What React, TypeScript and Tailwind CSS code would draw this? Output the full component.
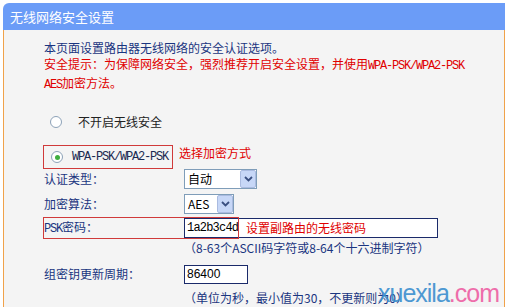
import React from 'react';

const cjk = "font-['Noto_Sans_CJK_SC','Liberation_Sans',sans-serif]";
const mono = "font-['Liberation_Mono','Noto_Sans_CJK_SC',monospace]";

const Radio = ({ checked }: { checked?: boolean }) => (
  <span className="w-[12px] h-[12px] rounded-full border border-[#8da2b8] bg-white flex items-center justify-center shrink-0">
    {checked && <span className="w-[5px] h-[5px] rounded-full bg-[#3fae3f]" />}
  </span>
);

const Select = ({ value, width }: { value: string; width: string }) => (
  <div className={`${width} h-[20px] border border-[#7f9db9] bg-white flex items-center`}>
    <span className="flex-1 pl-[3px] text-[12px] text-black leading-none">{value}</span>
    <span className="w-[16px] h-[18px] bg-[#c7d7f7] border border-[#aabbe0] rounded-[2px] flex items-center justify-center">
      <svg width="9" height="6" viewBox="0 0 9 6">
        <path d="M1 1 L4.5 4.5 L8 1" stroke="#3a4f80" strokeWidth="1.8" fill="none" />
      </svg>
    </span>
  </div>
);

const App = () => {
  return (
    <div className={`w-[508px] h-[307px] bg-white pt-[3px] px-[3px] overflow-hidden relative ${cjk}`}>
      <div className="h-[27px] bg-[#6b9cf7] rounded-tl-[6px] pl-[7px] flex items-center text-white text-[13px]">
        无线网络安全设置
      </div>
      <div className="h-[277px] bg-[#f4f4f4] border-x border-[#f0a24a] pl-[40px] pt-[10px] text-[12px] text-[#1a3580]">
        <p className="leading-[16px]">本页面设置路由器无线网络的安全认证选项。</p>
        <p className="leading-[16px] text-[#e00000]">
          安全提示：为保障网络安全，强烈推荐开启安全设置，并使用
          <span className={`${mono} text-[12px] tracking-[-1.2px]`}>WPA-PSK/WPA2-PSK</span>
        </p>
        <p className="leading-[17px] text-[#e00000]">
          <span className={`${mono} text-[12px] tracking-[-1.2px]`}>AES</span>加密方法。
        </p>

        <div className="mt-[18px] h-[20px] flex items-center pl-[6px] gap-[16px] text-[#222]">
          <Radio />
          <span>不开启无线安全</span>
        </div>

        <div className="mt-[13px] flex items-center">
          <div className="-ml-px h-[24px] w-[130px] border border-[#d03a3a] flex items-center pl-[7px] gap-[9px]">
            <Radio checked />
            <span className={`${mono} text-[12px] tracking-[-1.2px] text-[#1a2a50]`}>WPA-PSK/WPA2-PSK</span>
          </div>
          <span className="ml-[6px] -mt-[8px] text-[#e00000] text-[12px]">选择加密方式</span>
        </div>

        <div className="h-[20px] flex items-center">
          <span className="w-[140px]">认证类型：</span>
          <Select value="自动" width="w-[73px]" />
        </div>

        <div className="mt-[5px] h-[20px] flex items-center">
          <span className="w-[140px]">加密算法：</span>
          <Select value="AES" width="w-[50px]" />
        </div>

        <div className="mt-[3px] h-[22px] flex items-center relative">
          <span className={`w-[140px] ${cjk}`}>
            <span className={`${mono} text-[12px] tracking-[-1.2px]`}>PSK</span>密码：
          </span>
          <div className="w-[254px] h-[20px] border border-[#1a2a6a] bg-white flex items-center">
            <span className={`${mono} text-[12px] tracking-[-0.8px] text-black pl-[2px] w-[58px]`}>1a2b3c4d</span>
            <span className="text-[#e00000] pl-[3px]">设置副路由的无线密码</span>
          </div>
          <div className="absolute left-[-1px] top-0 w-[196px] h-[22px] border border-[#d03a3a]" />
        </div>

        <div className="mt-px h-[16px] leading-[16px] pl-[140px]">
          （8-63个ASCII码字符或8-64个十六进制字符）
        </div>

        <div className="mt-[8px] h-[20px] flex items-center">
          <span className="w-[140px]">组密钥更新周期：</span>
          <div className="w-[64px] h-[19px] border border-[#1a2a6a] bg-white flex items-center pl-[2px] text-black font-['Liberation_Sans',sans-serif]">
            86400
          </div>
        </div>

        <div className="mt-[6px] h-[16px] leading-[16px] pl-[140px]">
          （单位为秒，最小值为30，不更新则为0）
        </div>
      </div>

      <div className="absolute right-[9px] bottom-[1px] text-[25px] leading-none tracking-[-1px] font-['Liberation_Sans',sans-serif] opacity-90">
        <span className="text-[#3b8fcf]">xuexila</span>
        <span className="text-[#ee5fa3]">.com</span>
      </div>
    </div>
  );
};

export default App;
